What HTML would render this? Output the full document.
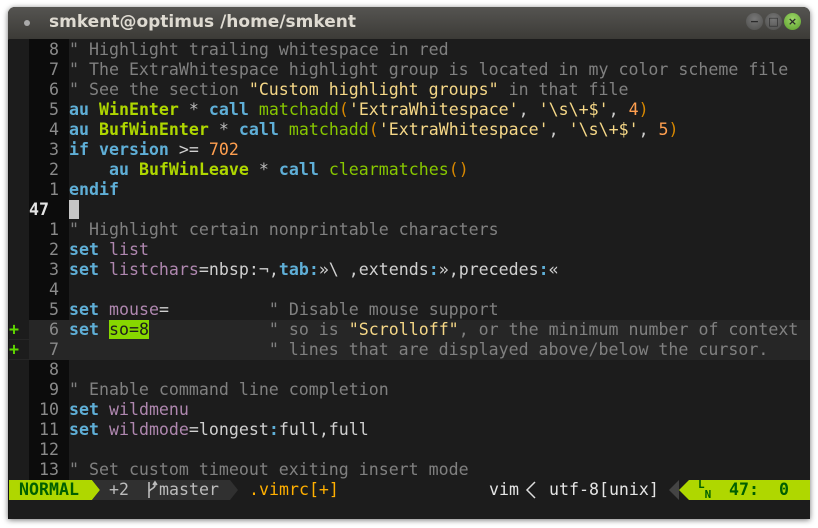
<!DOCTYPE html>
<html><head><meta charset="utf-8"><style>
html,body{margin:0;padding:0;width:818px;height:528px;background:#fff;overflow:hidden}
#win{position:absolute;left:8px;top:7px;width:802px;height:512px;background:#141414;border-radius:7px 7px 0 0;box-shadow:0 1px 6px rgba(0,0,0,.55);overflow:hidden}
#title{position:absolute;left:0;top:0;width:802px;height:32px;background:linear-gradient(#555451,#3c3b37);border-bottom:1px solid #2a2a28}
#title .t{position:absolute;left:41px;top:5px;font:bold 17px "DejaVu Sans","Liberation Sans",sans-serif;color:#dfdbd2}
#title .dot{position:absolute;left:16px;top:13px;width:6px;height:6px;border-radius:50%;background:#aaa}
.btn{position:absolute;top:6px;width:17px;height:17px;border-radius:50%;background:radial-gradient(circle at 50% 35%,#777,#4c4c4a);color:#2a2a2a;font:bold 11px "DejaVu Sans",sans-serif;text-align:center;line-height:17px}
#term{position:absolute;left:1px;top:32px;width:801px;height:480px;background:#1c1c1c}
.gut{position:absolute;left:20px;top:0;width:40px;height:441px;background:#0c0c0c}
.r{position:absolute;left:0;width:801px;height:20px;line-height:20px;font:16.6px "DejaVu Sans Mono","Liberation Mono",monospace;white-space:pre;color:#d0d0d0;margin-top:1px}
.r .s{display:inline-block;width:20px;color:#5fd700;font-weight:bold}
.r .n{display:inline-block;width:40px;color:#8a8a8a}
.c{color:#808080}.k{color:#5fafd7;font-weight:bold}.g{color:#afd700;font-weight:bold}.f{color:#87c700}
.p{color:#d78700}.y{color:#f5d787}.o{color:#ff9f4f}.m{color:#af87af}.w{color:#bcbcbc}
.cl{background:#262626}
#st{position:absolute;left:0;top:441px;width:801px;height:20px;background:#1c1c1c;font:16.6px "DejaVu Sans Mono","Liberation Mono",monospace;line-height:20px;white-space:pre}
#st span{position:absolute;top:0}
</style></head><body>
<div id="win">
<div id="title"><div class="dot"></div><div class="t">smkent@optimus /home/smkent</div>
<div class="btn" style="left:738px">−</div><div class="btn" style="left:757px">□</div><div class="btn" style="left:776px;background:radial-gradient(circle at 50% 35%,#9fd86a,#5a9e2a)">×</div></div>
<div id="term">
<div class="gut"></div>
<div class="r" style="top:0"><span class="s"> </span><span class="n">  8 </span><span class="c">" Highlight trailing whitespace in red</span></div>
<div class="r" style="top:20px"><span class="s"> </span><span class="n">  7 </span><span class="c">" The ExtraWhitespace highlight group is located in my color scheme file</span></div>
<div class="r" style="top:40px"><span class="s"> </span><span class="n">  6 </span><span class="c">" See the section </span><span class="y">"Custom highlight groups"</span><span class="c"> in that file</span></div>
<div class="r" style="top:60px"><span class="s"> </span><span class="n">  5 </span><span class="k">au</span> <span class="g">WinEnter</span> <span class="w">*</span> <span class="k">call</span> <span class="f">matchadd</span><span class="p">(</span><span class="y">'ExtraWhitespace'</span>, <span class="y">'\s\+$'</span>, <span class="o">4</span><span class="p">)</span></div>
<div class="r" style="top:80px"><span class="s"> </span><span class="n">  4 </span><span class="k">au</span> <span class="g">BufWinEnter</span> <span class="w">*</span> <span class="k">call</span> <span class="f">matchadd</span><span class="p">(</span><span class="y">'ExtraWhitespace'</span>, <span class="y">'\s\+$'</span>, <span class="o">5</span><span class="p">)</span></div>
<div class="r" style="top:100px"><span class="s"> </span><span class="n">  3 </span><span class="k">if</span> <span class="k">version</span> &gt;= <span class="o">702</span></div>
<div class="r" style="top:120px"><span class="s"> </span><span class="n">  2 </span>    <span class="k">au</span> <span class="g">BufWinLeave</span> <span class="w">*</span> <span class="k">call</span> <span class="f">clearmatches</span><span class="p">()</span></div>
<div class="r" style="top:140px"><span class="s"> </span><span class="n">  1 </span><span class="k">endif</span></div>
<div class="r" style="top:160px"><span class="s"> </span><span class="n" style="color:#e4e4e4;font-weight:bold">47  </span><span style="background:#c6c6c6"> </span></div>
<div class="r" style="top:180px"><span class="s"> </span><span class="n">  1 </span><span class="c">" Highlight certain nonprintable characters</span></div>
<div class="r" style="top:200px"><span class="s"> </span><span class="n">  2 </span><span class="k">set</span> <span class="m">list</span></div>
<div class="r" style="top:220px"><span class="s"> </span><span class="n">  3 </span><span class="k">set</span> <span class="m">listchars</span>=nbsp:¬,<span class="k">tab:</span>»\ ,extends<span class="k">:</span>»,precedes<span class="k">:</span>«</div>
<div class="r" style="top:240px"><span class="s"> </span><span class="n">  4 </span></div>
<div class="r" style="top:260px"><span class="s"> </span><span class="n">  5 </span><span class="k">set</span> <span class="m">mouse</span>=          <span class="c">" Disable mouse support</span></div>
<div class="r cl" style="top:280px"><span class="s" style="background:#1c1c1c">+</span><span class="n">  6 </span><span class="k">set</span> <span style="background:#87d700;color:#1c1c1c">so=8</span>            <span class="c">" so is </span><span class="y">"Scrolloff"</span><span class="c">, or the minimum number of context</span></div>
<div class="r cl" style="top:300px"><span class="s" style="background:#1c1c1c">+</span><span class="n">  7 </span>                    <span class="c">" lines that are displayed above/below the cursor.</span></div>
<div class="r" style="top:320px"><span class="s"> </span><span class="n">  8 </span></div>
<div class="r" style="top:340px"><span class="s"> </span><span class="n">  9 </span><span class="c">" Enable command line completion</span></div>
<div class="r" style="top:360px"><span class="s"> </span><span class="n"> 10 </span><span class="k">set</span> <span class="m">wildmenu</span></div>
<div class="r" style="top:380px"><span class="s"> </span><span class="n"> 11 </span><span class="k">set</span> <span class="m">wildmode</span>=longest<span class="k">:</span>full,full</div>
<div class="r" style="top:400px"><span class="s"> </span><span class="n"> 12 </span></div>
<div class="r" style="top:420px"><span class="s"> </span><span class="n"> 13 </span><span class="c">" Set custom timeout exiting insert mode</span></div>
<div id="st">
<span style="left:0;width:83px;height:20px;background:#afd700"></span>
<svg style="position:absolute;left:83px;top:0" width="160" height="20"><polygon points="0,0 8,10 0,20" fill="#afd700"/><polygon points="8,0 8,20 0,20 8,10 0,0" fill="#303030"/><rect x="8" y="0" width="130" height="20" fill="#303030"/><polygon points="138,0 146,10 138,20" fill="#303030"/></svg>
<span style="left:10px;color:#005f00;font-weight:bold">NORMAL</span>
<span style="left:100px;color:#bcbcbc">+2</span>
<svg style="position:absolute;left:137px;top:0" width="12" height="20"><path d="M3 2v16M3 12c0-3 6-3 6-7V3M7 5l2-3 2 3" stroke="#bcbcbc" stroke-width="1.6" fill="none"/></svg>
<span style="left:150px;color:#bcbcbc">master</span>
<span style="left:240px;color:#ffaf00">.vimrc[+]</span>
<span style="left:480px;color:#e4e4e4">vim</span>
<svg style="position:absolute;left:515px;top:0" width="14" height="20"><path d="M11 2L3 10l8 8" stroke="#ddd" stroke-width="1.5" fill="none"/></svg>
<span style="left:540px;color:#e4e4e4">utf-8[unix]</span>
<svg style="position:absolute;left:660px;top:0" width="141" height="20"><polygon points="10,0 10,20 0,10" fill="#444"/><polygon points="20,0 10,10 20,20" fill="#afd700"/><rect x="20" y="0" width="121" height="20" fill="#afd700"/></svg>
<span style="left:689px;color:#005f00;font-size:11px;line-height:10px;font-weight:bold">L<br> N</span>
<span style="left:720px;color:#005f00;font-weight:bold">47:  0</span>
</div>
</div>
</div>
</body></html>
